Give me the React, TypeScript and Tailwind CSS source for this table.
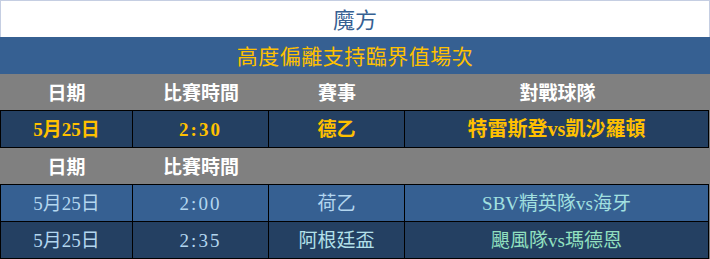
import React from "react";

const FONT = "font-['Liberation_Serif','Noto_Sans_CJK_TC',serif]";

function Cell({ w, children, cls = "", last = false }: { w: string; children?: React.ReactNode; cls?: string; last?: boolean }) {
  return (
    <div className={`${w} flex items-center justify-center border-l border-black ${last ? "border-r" : ""} ${cls}`}>
      {children}
    </div>
  );
}

function DataRow({ bg, h, bottom, cells }: { bg: string; h: string; bottom: boolean; cells: { t: string; c: string }[]; }) {
  const widths = ["w-[132px]", "w-[136px]", "w-[136px]", "w-[305px]"];
  return (
    <div className={`flex w-[709px] ${h} ${bg} border-t border-black ${bottom ? "border-b" : ""}`}>
      {cells.map((c, i) => (
        <Cell key={i} w={widths[i]} last={i === 3} cls={c.c}>
          {c.t}
        </Cell>
      ))}
    </div>
  );
}

function HeaderRow({ labels }: { labels: string[] }) {
  const widths = ["w-[133px]", "w-[136px]", "w-[136px]", "w-[305px]"];
  return (
    <div className="flex w-[710px] h-[36px] bg-[#808080] text-white font-bold text-[19px]">
      {widths.map((w, i) => (
        <div key={i} className={`${w} flex items-center justify-center pt-[2px]`}>
          {labels[i] ?? ""}
        </div>
      ))}
    </div>
  );
}

export default function App() {
  return (
    <div className={`w-[710px] h-[259px] bg-[#808080] ${FONT} leading-none`}>
      <div className="h-[37px] w-[710px] bg-white border-t border-l border-r border-[#c5cee2] flex items-center justify-center pt-[3px] text-[22px] text-[#366092]">
        魔方
      </div>
      <div className="h-[37px] w-[710px] bg-[#366092] flex items-center justify-center pt-[4px] text-[21px] tracking-[0.5px] text-[#ffc000]">
        高度偏離支持臨界值場次
      </div>
      <HeaderRow labels={["日期", "比賽時間", "賽事", "對戰球隊"]} />
      <DataRow
        bg="bg-[#244062]"
        h="h-[38px]"
        bottom={true}
        cells={[
          { t: "5月25日", c: "text-[#ffc000] font-bold text-[19px]" },
          { t: "2:30", c: "text-[#ffc000] font-bold text-[19px] tracking-[2px]" },
          { t: "德乙", c: "text-[#ffc000] font-bold text-[19px]" },
          { t: "特雷斯登vs凱沙羅頓", c: "text-[#ffc000] font-bold text-[20px]" },
        ]}
      />
      <HeaderRow labels={["日期", "比賽時間"]} />
      <DataRow
        bg="bg-[#366092]"
        h="h-[37px]"
        bottom={false}
        cells={[
          { t: "5月25日", c: "text-[#b3d6ef] text-[19px]" },
          { t: "2:00", c: "text-[#b3d6ef] text-[19px] tracking-[2px]" },
          { t: "荷乙", c: "text-[#b3d6ef] text-[19px]" },
          { t: "SBV精英隊vs海牙", c: "text-[#a2e0e0] text-[19px]" },
        ]}
      />
      <DataRow
        bg="bg-[#244062]"
        h="h-[38px]"
        bottom={true}
        cells={[
          { t: "5月25日", c: "text-[#b3d6ef] text-[19px]" },
          { t: "2:35", c: "text-[#b3d6ef] text-[19px] tracking-[2px]" },
          { t: "阿根廷盃", c: "text-[#b3e0ea] text-[19px]" },
          { t: "颶風隊vs瑪德恩", c: "text-[#92e0c0] text-[19px]" },
        ]}
      />
    </div>
  );
}
